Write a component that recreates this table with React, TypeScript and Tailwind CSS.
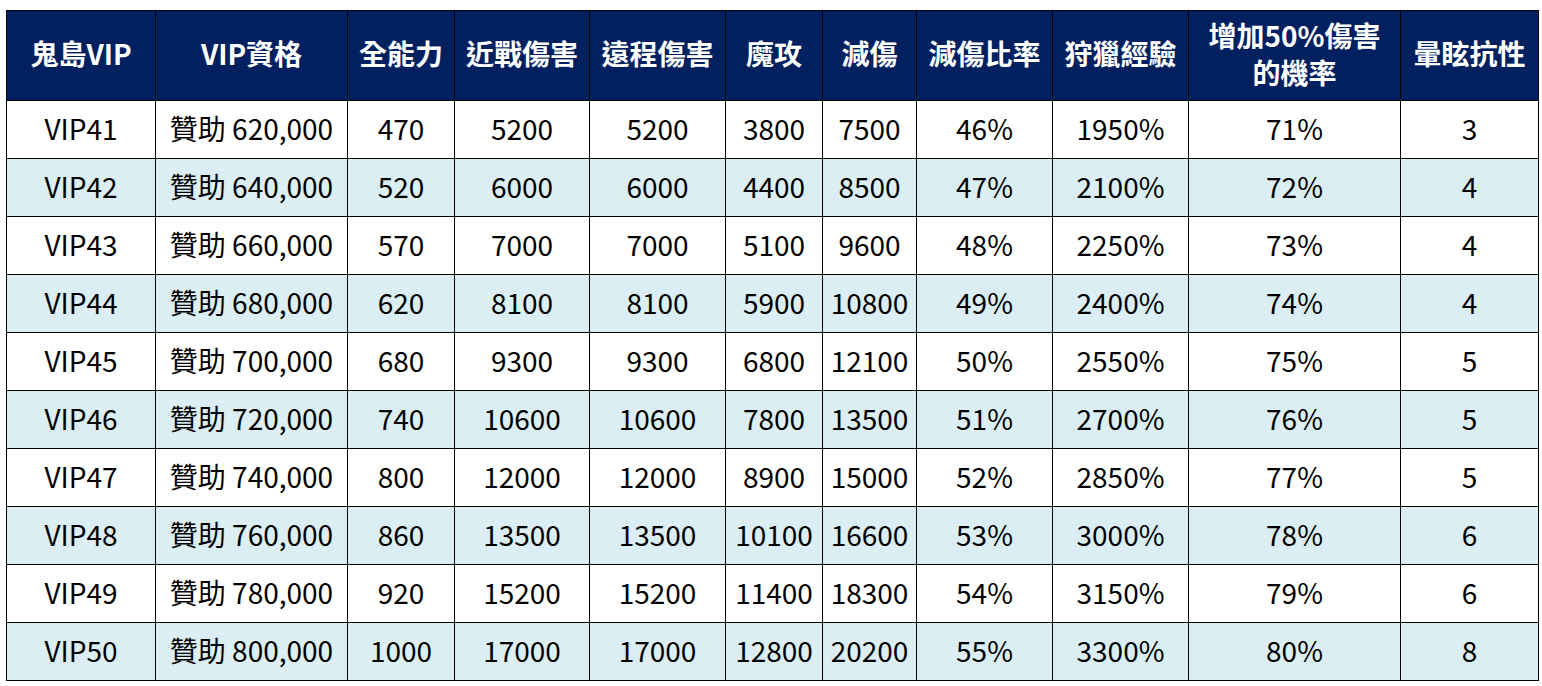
const HEADERS: React.ReactNode[] = [
  '鬼島VIP',
  'VIP資格',
  '全能力',
  '近戰傷害',
  '遠程傷害',
  '魔攻',
  '減傷',
  '減傷比率',
  '狩獵經驗',
  <>
    增加50%傷害
    <br />
    的機率
  </>,
  '暈眩抗性',
]

const WIDTHS = [149, 192, 107, 135, 136, 97, 94, 136, 136, 212, 138]

const ROWS = [
  ['VIP41', '贊助 620,000', '470', '5200', '5200', '3800', '7500', '46%', '1950%', '71%', '3'],
  ['VIP42', '贊助 640,000', '520', '6000', '6000', '4400', '8500', '47%', '2100%', '72%', '4'],
  ['VIP43', '贊助 660,000', '570', '7000', '7000', '5100', '9600', '48%', '2250%', '73%', '4'],
  ['VIP44', '贊助 680,000', '620', '8100', '8100', '5900', '10800', '49%', '2400%', '74%', '4'],
  ['VIP45', '贊助 700,000', '680', '9300', '9300', '6800', '12100', '50%', '2550%', '75%', '5'],
  ['VIP46', '贊助 720,000', '740', '10600', '10600', '7800', '13500', '51%', '2700%', '76%', '5'],
  ['VIP47', '贊助 740,000', '800', '12000', '12000', '8900', '15000', '52%', '2850%', '77%', '5'],
  ['VIP48', '贊助 760,000', '860', '13500', '13500', '10100', '16600', '53%', '3000%', '78%', '6'],
  ['VIP49', '贊助 780,000', '920', '15200', '15200', '11400', '18300', '54%', '3150%', '79%', '6'],
  ['VIP50', '贊助 800,000', '1000', '17000', '17000', '12800', '20200', '55%', '3300%', '80%', '8'],
]

export default function App() {
  return (
    <div
      className="min-h-[686px] bg-white pl-[6px] pt-[10px]"
      style={{ fontFamily: '"Noto Sans CJK TC", "Noto Sans", sans-serif' }}
    >
      <table className="table-fixed border-collapse text-[28px] text-black">
        <colgroup>
          {WIDTHS.map((w, i) => (
            <col key={i} style={{ width: w }} />
          ))}
        </colgroup>
        <thead>
          <tr className="h-[90px] bg-[#002060]">
            {HEADERS.map((h, i) => (
              <th
                key={i}
                className="border border-black p-0 pb-[4px] text-center align-middle text-[28px] font-bold leading-[37px] whitespace-nowrap text-white"
              >
                {h}
              </th>
            ))}
          </tr>
        </thead>
        <tbody>
          {ROWS.map((row, r) => (
            <tr key={r} className={r % 2 === 1 ? 'h-[58px] bg-[#daeef3]' : 'h-[58px] bg-white'}>
              {row.map((cell, c) => (
                <td
                  key={c}
                  className="border border-black p-0 pb-[3px] text-center align-middle leading-none whitespace-nowrap"
                >
                  {cell}
                </td>
              ))}
            </tr>
          ))}
        </tbody>
      </table>
    </div>
  )
}
